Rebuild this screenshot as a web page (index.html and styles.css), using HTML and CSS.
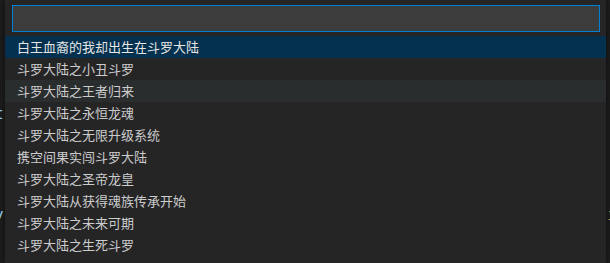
FILE: index.html
```html
<!DOCTYPE html>
<html lang="zh-CN">
<head>
<meta charset="utf-8">
<link rel="stylesheet" href="styles.css">
</head>
<body>
<div class="editor">
  <div class="line l1"><span class="frag-left">t</span><span class="frag-right blue">[</span></div>
  <div class="line l2"><span class="frag-left">y</span><span class="frag-right orange">i</span></div>
</div>
<div class="quick-input">
  <div class="input-wrap"><div class="input"></div></div>
  <ul class="list">
    <li class="row selected">白王血裔的我却出生在斗罗大陆</li>
    <li class="row">斗罗大陆之小丑斗罗</li>
    <li class="row hover">斗罗大陆之王者归来</li>
    <li class="row">斗罗大陆之永恒龙魂</li>
    <li class="row">斗罗大陆之无限升级系统</li>
    <li class="row">携空间果实闯斗罗大陆</li>
    <li class="row">斗罗大陆之圣帝龙皇</li>
    <li class="row">斗罗大陆从获得魂族传承开始</li>
    <li class="row">斗罗大陆之未来可期</li>
    <li class="row">斗罗大陆之生死斗罗</li>
  </ul>
</div>
</body>
</html>
```
FILE: styles.css
```css
html, body {
  margin: 0;
  padding: 0;
  width: 610px;
  height: 263px;
  overflow: hidden;
  background: #1e1e1e;
  font-family: "Noto Sans CJK SC", "Noto Sans", sans-serif;
}
.editor {
  padding-top: 104px;
  font-family: "DejaVu Sans Mono", monospace;
  font-size: 16px;
  color: #9cdcfe;
}
.line {
  display: flex;
  justify-content: space-between;
  height: 19px;
  line-height: 19px;
}
.l2 { margin-top: 82px; }
.frag-left { margin-left: -6px; color: #9cdcfe; }
.frag-right { margin-right: -7px; }
.blue { color: #cccccc; }
.orange { color: #d7ba7d; }
.quick-input {
  position: absolute;
  left: 5px;
  top: 0;
  width: 601px;
  height: 263px;
  background: #252526;
  box-shadow: 0 0 8px rgba(0,0,0,0.6);
}
.input-wrap {
  padding: 5px 6px 4px 7px;
}
.input {
  height: 25px;
  background: #3c3c3c;
  border: 1px solid #007fd4;
}
.list {
  list-style: none;
  margin: 0;
  padding: 0;
}
.row {
  height: 22px;
  line-height: 22px;
  padding-left: 12px;
  font-size: 13px;
  color: #cccccc;
  white-space: nowrap;
}
.row.selected {
  background: #04314f;
  color: #e6e6e6;
}
.row.hover {
  background: #2a2d2e;
}
```
